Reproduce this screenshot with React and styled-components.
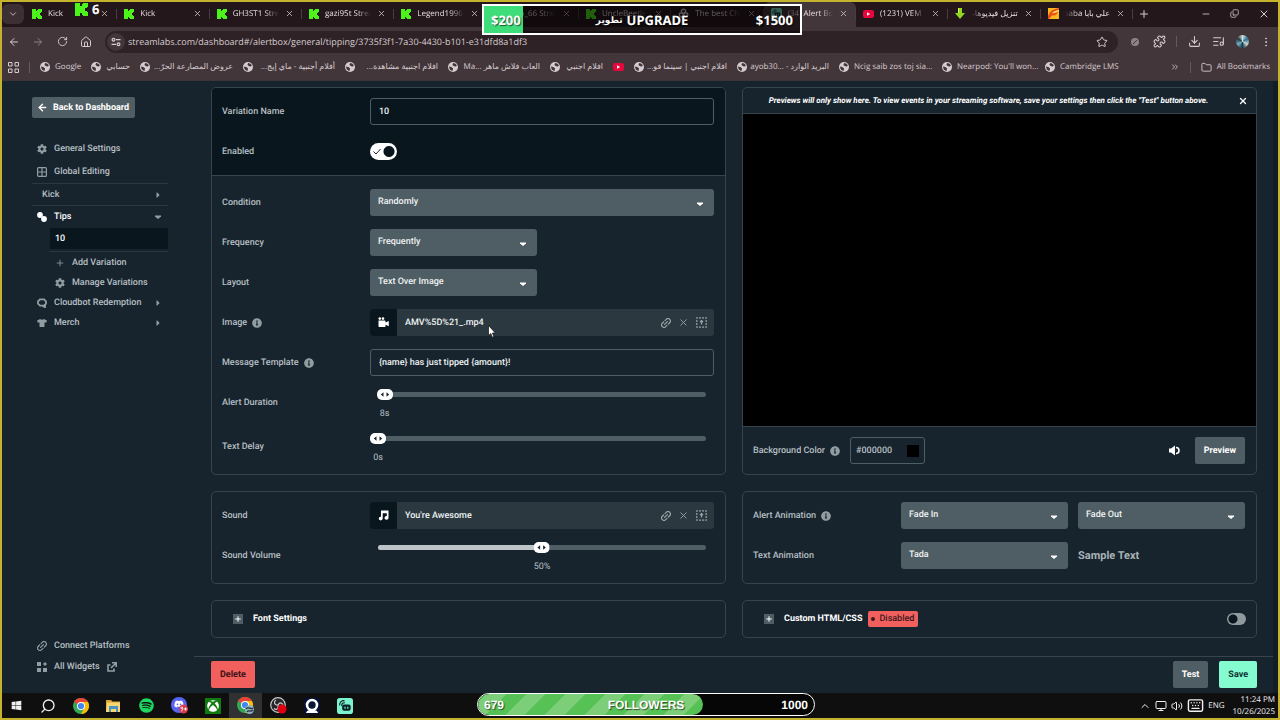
import React, { useState } from 'react';
import styled, { createGlobalStyle, css } from 'styled-components';
import {
  ArrowLeft, ArrowRight, RotateCw, House, Star, Puzzle, Download, ListMusic,
  EllipsisVertical, X, Plus, Minus, Copy, Folder, ChevronsRight, ChevronDown,
  ChevronUp, Search, Keyboard, Volume2, Monitor,
} from 'lucide-react';
import { FaCog, FaTshirt, FaInfoCircle, FaWindows, FaSpotify, FaDiscord, FaXbox } from 'react-icons/fa';

const c = {
  frame: '#c6b32d',
  strip: '#23171b',
  toolbar: '#43363a',
  field: '#2e2226',
  chromeText: '#d6cccf',
  page: '#17242d',
  dark: '#09161d',
  line: '#37444b',
  panel: '#2b383f',
  button: '#4f5e64',
  text: '#b6bfc3',
  icon: '#929da2',
  bright: '#eef2f3',
  red: '#f2605d',
  mint: '#85fbd0',
};

const Global = createGlobalStyle`
  *, *::before, *::after { box-sizing: border-box; }
  body { margin: 0; background: ${c.page}; text-rendering: geometricPrecision; }
  button, input, select { font: inherit; color: inherit; margin: 0; text-rendering: inherit; }
  button { border: 0; padding: 0; background: none; cursor: pointer; }
  a { color: inherit; text-decoration: none; }
  svg { display: block; flex: none; }
`;

const Frame = styled.div`
  position: relative;
  display: flex;
  flex-direction: column;
  min-height: 100vh;
  border: 2px solid ${c.frame};
  font-family: Roboto, "Noto Sans", sans-serif;
  font-size: 9px;
  line-height: 14px;
  overflow: hidden;
`;

/* ---------- browser chrome ---------- */

const Chrome = styled.header`
  background: ${c.toolbar};
  color: ${c.chromeText};
  font-family: "Open Sans", "DejaVu Sans", sans-serif;
  font-size: 8px;
`;

const TabStrip = styled.div`
  display: flex;
  align-items: stretch;
  height: 25px;
  background: ${c.strip};
`;

const TabSearch = styled.button`
  display: grid;
  place-items: center;
  width: 22px;
  margin: 2px 1px 3px 0;
  border-radius: 6px;
  background: #3c3035;
`;

const Tabs = styled.nav`
  display: flex;
  flex: 1;
  min-width: 0;
`;

const Tab = styled.div`
  position: relative;
  display: flex;
  flex: 1 1 0;
  min-width: 0;
  align-items: center;
  gap: 6px;
  padding: 0 8px 2px 7px;
  border-radius: 6px 6px 0 0;
  background: ${p => (p.$active ? c.toolbar : 'transparent')};
  &::after {
    content: '';
    position: absolute;
    right: 0;
    top: 7px;
    height: 10px;
    border-right: 1px solid #4b3d42;
  }
`;

const TabTitle = styled.a`
  flex: 1;
  min-width: 0;
  overflow: hidden;
  color: #e6dddf;
  white-space: nowrap;
  mask-image: linear-gradient(to ${p => (p.$rtl ? 'left' : 'right')}, #000 70%, transparent);
`;

const WindowButtons = styled.div`
  display: flex;
  align-items: center;
  width: 145px;
  padding: 0 0 2px 4px;
`;

const WindowButton = styled.button`
  display: grid;
  place-items: center;
  width: 29px;
  height: 18px;
  &:first-child { width: 14px; margin-right: auto; }
`;

const Toolbar = styled.div`
  display: flex;
  align-items: center;
  height: 29px;
`;

const ToolButton = styled.button`
  display: grid;
  place-items: center;
  width: 24px;
  height: 22px;
  opacity: ${p => (p.$dim ? 0.5 : 1)};
`;

const AddressBar = styled.label`
  display: flex;
  flex: 1;
  align-items: center;
  height: 22px;
  margin: 0 5px 0 7px;
  padding-right: 10px;
  border-radius: 11px;
  background: ${c.field};
`;

const SiteInfo = styled.span`
  display: grid;
  place-items: center;
  width: 18px;
  height: 18px;
  margin: 0 3px 0 2px;
  border-radius: 9px;
  background: #43363a;
`;

const AddressInput = styled.input`
  flex: 1;
  min-width: 0;
  border: 0;
  padding: 0;
  outline: 0;
  background: none;
  font-size: 9px;
`;

const Divider = styled.span`
  width: 1px;
  height: 11px;
  margin: 0 ${p => p.$space || 5}px;
  background: #66585d;
`;

const Avatar = styled.span`
  width: 13px;
  height: 13px;
  border-radius: 50%;
  background: conic-gradient(#cfe0e3, #2f6f8e, #c9d4cf, #1d3a4d, #6fb2c4, #26353c, #cfe0e3);
`;

const Bookmarks = styled.nav`
  display: flex;
  align-items: center;
  height: 25px;
  padding: 0 8px 2px 6px;
  border-bottom: 1px solid #3b3438;
`;

const Bookmark = styled.a`
  display: flex;
  align-items: center;
  gap: 5px;
  margin-right: 10px;
`;

const BookmarkText = styled.span`
  width: ${p => p.$width}px;
  white-space: nowrap;
`;

const BookmarkEnd = styled.div`
  display: flex;
  align-items: center;
  gap: 5px;
  margin-left: auto;
  white-space: nowrap;
`;

/* ---------- goal overlays ---------- */

const Overlay = styled.div`
  position: absolute;
  z-index: 2;
  display: grid;
  grid-template-columns: 1fr auto 1fr;
  align-items: center;
  color: #fff;
  font-weight: 700;
  text-shadow: 1px 1px 1px rgba(0, 0, 0, 0.6);
  & > :last-child { text-align: right; }
`;

const UpgradeGoal = styled(Overlay)`
  top: 2px;
  left: calc(50% - 158px);
  width: 320px;
  height: 31px;
  padding: 0 7px;
  border: 2px solid #fff;
  background: linear-gradient(to right, #3fdd7a 39px, rgba(6, 2, 4, 0.62) 39px);
  font-family: "Noto Sans", "DejaVu Sans", sans-serif;
  font-size: 13px;
`;

const GoalName = styled.span`
  display: flex;
  align-items: center;
  gap: 4px;
`;

const GoalArabic = styled.span`
  font-size: 9px;
`;

const FollowerGoal = styled(Overlay)`
  bottom: 2px;
  left: calc(50% - 163px);
  width: 338px;
  height: 23px;
  padding: 0 6px;
  border: 1px solid #fff;
  border-radius: 12px;
  background: #060606;
  font-family: "Liberation Sans", sans-serif;
  font-size: 12px;
  overflow: hidden;
  & > * { position: relative; }
  &::before {
    content: '';
    position: absolute;
    inset: 0 auto 0 0;
    width: 67%;
    border-radius: 11px;
    background: repeating-linear-gradient(-45deg, #56c255 0 14px, #7ccf78 14px 28px);
  }
`;

const ViewerBadge = styled.div`
  position: absolute;
  z-index: 2;
  top: 0;
  left: 73px;
  display: flex;
  align-items: center;
  gap: 4px;
  color: #fff;
  font: 700 13px/15px "Noto Sans", sans-serif;
`;

const Pointer = styled.svg`
  position: absolute;
  z-index: 3;
  left: 486px;
  top: 323px;
`;

/* ---------- dashboard ---------- */

const Dashboard = styled.div`
  display: flex;
  flex: 1;
  background: ${c.page};
  color: ${c.text};
  font-weight: 500;
  border-right: 5px solid #121d25;
`;

const Sidebar = styled.aside`
  display: flex;
  flex-direction: column;
  width: 192px;
  padding: 16px 26px 16px 30px;
`;

const Button = styled.button`
  display: flex;
  align-items: center;
  justify-content: center;
  height: 27px;
  padding: 0 9px;
  border-radius: 2px;
  background: ${p => p.$bg || c.button};
  color: ${p => p.$color || '#fff'};
  font-weight: 700;
`;

const BackButton = styled.a`
  display: flex;
  align-items: center;
  align-self: flex-start;
  gap: 5px;
  height: 21px;
  margin-bottom: 19px;
  padding: 0 6px 0 5px;
  border-radius: 2px;
  background: ${c.button};
  color: #fff;
  font-weight: 700;
`;

const NavItem = styled.a`
  display: flex;
  align-items: center;
  gap: 7px;
  height: ${p => p.$h || 20}px;
  padding: 0 7px 0 ${p => p.$indent || 5}px;
  border-bottom: ${p => (p.$line ? `1px solid ${c.panel}` : 0)};
  color: ${p => (p.$on ? '#fff' : 'inherit')};
  white-space: nowrap;
  & > svg { color: ${c.icon}; }
`;

const NavEnd = styled.span`
  margin-left: auto;
  color: ${c.icon};
`;

const SubNav = styled.div`
  margin-left: 18px;
`;

const Variation = styled.a`
  display: flex;
  align-items: center;
  height: 21px;
  padding-left: 5px;
  background: ${c.dark};
  color: #fff;
`;

const SubLine = styled.div`
  height: 2px;
  border-top: 1px solid ${c.panel};
  margin-top: 2px;
`;

const NavBottom = styled.div`
  margin-top: auto;
`;

const Main = styled.main`
  display: flex;
  flex: 1;
  flex-direction: column;
  min-width: 0;
`;

const Columns = styled.div`
  display: grid;
  flex: 1;
  grid-template-columns: 1fr 1fr;
  align-content: start;
  gap: 16px;
  padding: 6px 16px 16px 17px;
`;

const Card = styled.section`
  display: flex;
  flex-direction: column;
  border: 1px solid ${c.line};
  border-radius: 5px;
  overflow: hidden;
  min-width: 0;
`;

const Section = styled.div`
  display: flex;
  flex-direction: column;
  gap: 13px;
  padding: ${p => p.$top || 10}px 11px 10px 10px;
  background: ${p => (p.$dark ? c.dark : 'transparent')};
  border-bottom: ${p => (p.$dark ? `1px solid ${c.line}` : 0)};
`;

const Row = styled.div`
  display: grid;
  grid-template-columns: 148px minmax(0, 1fr);
  align-items: start;
`;

const Label = styled.label`
  display: flex;
  align-items: center;
  gap: 5px;
  height: 27px;
  white-space: nowrap;
`;

const field = css`
  width: 100%;
  min-width: 0;
  height: 27px;
  border-radius: 3px;
  padding: 0 8px;
  outline: 0;
`;

const TextInput = styled.input`
  ${field}
  border: 1px solid ${c.button};
  background: transparent;
  color: ${c.bright};
`;

const SelectBox = styled.div`
  display: grid;
  align-items: center;
  max-width: ${p => p.$max || 'none'};
  color: #fff;
  & > * { grid-area: 1 / 1; }
  & > svg { justify-self: end; margin: 2px 11px 0 0; pointer-events: none; }
`;

const Select = styled.select`
  ${field}
  padding-bottom: 2px;
  appearance: none;
  border: 0;
  background: ${c.button};
  color: ${c.bright};
`;

const Pair = styled.div`
  display: grid;
  grid-template-columns: 1fr 1fr;
  gap: 10px;
  align-items: center;
`;

const Sample = styled.span`
  color: #a9b3b7;
  font-size: 11px;
  font-weight: 700;
`;

const FileBar = styled.div`
  display: flex;
  align-items: center;
  height: 27px;
  border-radius: 3px;
  background: ${c.panel};
  color: ${c.bright};
  overflow: hidden;
`;

const FileType = styled.span`
  display: grid;
  place-items: center;
  width: 27px;
  height: 27px;
  margin-right: 8px;
  background: ${c.dark};
`;

const FileActions = styled.div`
  display: flex;
  align-items: center;
  gap: 7px;
  margin-left: auto;
  padding-right: 7px;
  color: #99a4a9;
`;

const SliderBox = styled.div`
  position: relative;
  height: 31px;
  padding-top: 3px;
`;

const Rail = styled.div`
  position: relative;
  height: 5px;
  margin: 0 8px;
  border-radius: 3px;
  background: ${c.button};
`;

const RailFill = styled.div`
  height: 5px;
  border-radius: 3px 0 0 3px;
  background: ${p => (p.$show ? '#bdc5c8' : 'transparent')};
`;

const Marker = styled.output`
  position: absolute;
  top: -3px;
  display: flex;
  flex-direction: column;
  align-items: center;
  gap: 7px;
  transform: translateX(-50%);
  font-weight: 400;
`;

const RangeInput = styled.input`
  position: absolute;
  top: 0;
  left: 0;
  width: 100%;
  height: 11px;
  opacity: 0;
`;

const Toggle = styled.label`
  display: grid;
  align-items: center;
  height: ${p => (p.$small ? 12 : 27)}px;
  width: ${p => (p.$small ? 19 : 27)}px;
  & > * { grid-area: 1 / 1; }
  & > svg { margin-left: 3px; pointer-events: none; }
`;

const ToggleInput = styled.input`
  appearance: none;
  width: 100%;
  height: ${p => (p.$small ? 12 : 17)}px;
  border-radius: 9px;
  background:
    radial-gradient(circle at ${p => (p.$small ? '6px 6px' : '19px 50%')},
      ${c.dark} ${p => (p.$small ? 4 : 5)}px, transparent ${p => (p.$small ? 5 : 6)}px),
    ${p => (p.$small ? '#8f9a9e' : '#fff')};
`;

const PreviewHead = styled.div`
  display: grid;
  grid-template-columns: minmax(0, 1fr) 18px;
  align-items: center;
  height: 26px;
  padding-right: 4px;
  border-bottom: 1px solid ${c.line};
  color: #fff;
  font-size: 8px;
  font-weight: 700;
  font-style: italic;
  text-align: center;
  white-space: nowrap;
  & > button { display: grid; place-items: center; }
`;

const PreviewScreen = styled.div`
  flex: 1;
  background: #000;
`;

const PreviewFoot = styled.div`
  display: flex;
  align-items: center;
  padding: 10px 11px 10px 10px;
  border-top: 1px solid ${c.line};
`;

const ColorField = styled.div`
  display: flex;
  align-items: center;
  width: 75px;
  height: 27px;
  margin-left: 10px;
  padding: 0 5px;
  border: 1px solid ${c.button};
  border-radius: 3px;
`;

const HexInput = styled.input`
  flex: 1;
  min-width: 0;
  border: 0;
  padding: 0;
  background: none;
`;

const Swatch = styled.input`
  appearance: none;
  width: 12px;
  height: 12px;
  border: 0;
  padding: 0;
  background: #000;
  &::-webkit-color-swatch-wrapper { padding: 0; }
  &::-webkit-color-swatch { border: 0; }
`;

const SoundButton = styled.button`
  margin: 0 15px 0 auto;
  color: #fff;
`;

const Collapsed = styled.div`
  display: flex;
  align-items: center;
  height: 36px;
  padding: 0 10px 0 21px;
  color: #fff;
`;

const ExpandButton = styled.button`
  display: flex;
  align-items: center;
  gap: 10px;
  font-weight: 700;
`;

const PlusBox = styled.span`
  display: grid;
  place-items: center;
  width: 10px;
  height: 10px;
  background: ${c.button};
`;

const Badge = styled.span`
  display: flex;
  align-items: center;
  gap: 4px;
  height: 16px;
  margin: 0 auto 0 6px;
  padding: 0 4px 0 3px;
  border-radius: 2px;
  background: ${c.red};
  color: #3c1a20;
`;

const Dot = styled.i`
  width: 4px;
  height: 4px;
  border-radius: 2px;
  background: currentColor;
`;

const Footer = styled.footer`
  display: flex;
  gap: 11px;
  padding: 4px 16px 5px 17px;
  border-top: 1px solid ${c.line};
  & > :first-child { margin-right: auto; }
`;

/* ---------- taskbar ---------- */

const Taskbar = styled.footer`
  display: flex;
  align-items: stretch;
  height: 25px;
  background: #0f0f10;
  color: #f0f0f0;
  font-family: "Open Sans", sans-serif;
`;

const TaskButton = styled.button`
  display: grid;
  place-items: center;
  width: ${p => (p.$start ? 29 : 33)}px;
  background: ${p => (p.$active ? '#303133' : 'transparent')};
`;

const Tray = styled.div`
  display: flex;
  align-items: center;
  gap: 4px;
  margin-left: auto;
  padding-right: 3px;
  font-size: 8px;
`;

const Clock = styled.time`
  display: flex;
  flex-direction: column;
  align-items: flex-end;
  margin-left: 4px;
  line-height: 12px;
`;

/* ---------- drawings ---------- */

const KickMark = ({ size = 10 }) => (
  <svg width={size} height={size} viewBox="0 0 10 10" fill="#4df41a" shapeRendering="crispEdges">
    <path d="M0 0h4v2h1V1h1V0h4v3H9v1H8v2h1v1h1v3H6V9H5V8H4v2H0z" />
  </svg>
);

const YouTubeMark = () => (
  <svg width="11" height="10" viewBox="0 0 11 10">
    <rect y="1" width="11" height="8" rx="2" fill="#e8063c" />
    <path d="M4 3.2v3.6L7.2 5z" fill="#fff" />
  </svg>
);

const DownloadMark = () => (
  <svg width="10" height="11" viewBox="0 0 10 11">
    <path d="M3 0h4v5h3L5 11 0 5h3z" fill="#8fd61c" />
    <path d="M3 0h1v5H3z" fill="#d7f26a" />
  </svg>
);

const ShopMark = () => (
  <svg width="11" height="11" viewBox="0 0 11 11">
    <rect width="11" height="11" fill="#ffb81c" />
    <path d="M0 8C2 3 5 1 11 0v2C6 3 5 4 4 5c2 .5 4 0 6-1-1 3-4 4-6 3.500C3 8.500 2 10 1 11H0z" fill="#e8501c" />
    <path d="M5.500 4.500C7 3.500 9 3 11 2.500" stroke="#fff3b0" strokeWidth=".8" fill="none" />
  </svg>
);

const GptMark = () => (
  <svg width="11" height="11" viewBox="0 0 12 12" fill="none" stroke="#d8d0d3" strokeWidth="1.6">
    <circle cx="6" cy="3.6" r="2.3" /><circle cx="3.7" cy="7.4" r="2.3" /><circle cx="8.3" cy="7.4" r="2.3" />
  </svg>
);

const StreamlabsMark = ({ size = 11 }) => (
  <svg width={size} height={size} viewBox="0 0 17 17">
    <rect width="17" height="17" rx="3" fill="#7df2cf" />
    <rect x="5.500" y="7" width="9" height="6.500" rx="2" fill="#0c2229" />
    <path d="M2.800 7.500c0-3 1.700-4.700 4.700-4.700M5 8c0-2 1-3 3-3" fill="none" stroke="#0c2229" strokeWidth="1.200" strokeLinecap="round" />
    <path d="M8.500 9.500v1.500M11.500 9.500v1.500" stroke="#7df2cf" strokeWidth="1.200" strokeLinecap="round" />
  </svg>
);

const Globe = () => (
  <svg width="10" height="10" viewBox="0 0 10 10">
    <circle cx="5" cy="5" r="5" fill="#d6cccf" />
    <path d="M5.2.9 4.400 3l1.700 1.200L8 4.500l.9-1.200C8.200 1.800 6.700.9 5.200.9zM1 4.600l2.300.3L5 6.300l-.4 2.800C2.700 9 1 7.200 1 4.600z" fill="#43363a" />
  </svg>
);

const TuneIcon = () => (
  <svg width="10" height="10" viewBox="0 0 10 10" fill="none" stroke="currentColor" strokeWidth="1.2">
    <circle cx="2.500" cy="2.700" r="1.400" /><path d="M5 2.700h4.500M.5 7.300H5" /><circle cx="7.500" cy="7.300" r="1.400" />
  </svg>
);

const AppsIcon = () => (
  <svg width="11" height="11" viewBox="0 0 11 11" fill="none" stroke="currentColor">
    <path d="M.5.500h3.500V4H.5zM7 .5h3.500V4H7zM.5 7h3.500v3.500H.5zM7 7h3.500v3.500H7z" />
  </svg>
);

const Caret = ({ side }) => (
  <svg width="6" height="6" viewBox="0 0 6 6" fill="currentColor">
    {side
      ? <path d="M1.500.5h.8L4.600 3 2.300 5.500h-.8z" />
      : <path d="M0 1.500h6v.8L3.500 4.800h-1L0 2.300z" />}
  </svg>
);

const GridIcon = () => (
  <svg width="10" height="10" viewBox="0 0 10 10" fill="none" stroke="currentColor" strokeWidth="1.200">
    <rect x=".6" y=".6" width="8.800" height="8.800" rx="1" /><path d="M5 1v8M1 5h8" />
  </svg>
);

const TipsIcon = () => (
  <svg width="10" height="10" viewBox="0 0 10 10" fill="#fff">
    <circle cx="3" cy="3" r="2.900" /><circle cx="7" cy="7" r="2.900" />
  </svg>
);

const BotIcon = () => (
  <svg width="10" height="10" viewBox="0 0 10 10" fill="none" stroke="currentColor" strokeWidth="1.800">
    <path d="M3 1.300h4l2 2v2.400l-2 2H3l-2-2V3.300z" /><path d="M5.500 7.600 8 9.300V7" />
  </svg>
);

const LinkIcon = () => (
  <svg width="10" height="10" viewBox="0 0 10 10" fill="none" stroke="currentColor" strokeWidth="1.200" strokeLinecap="round">
    <g transform="rotate(-45 5 5)">
      <path d="M4 2.600H2.200a2.400 2.400 0 0 0 0 4.800H4M6 2.600h1.800a2.400 2.400 0 0 1 0 4.800H6M3 5h4" />
    </g>
  </svg>
);

const WidgetsIcon = () => (
  <svg width="10" height="10" viewBox="0 0 10 10" fill="currentColor">
    <path d="M0 0h4v4H0zM0 6h4v4H0zM6 6h4v4H6zM8 0l2 2-2 2-2-2z" />
  </svg>
);

const ExternalIcon = () => (
  <svg width="10" height="10" viewBox="0 0 10 10" fill="none" stroke="currentColor" strokeWidth="1.600">
    <path d="M3.500 3H1v6h6V6.500M5 .8h4.200V5M9 1 4 6" />
  </svg>
);

const UploadIcon = () => (
  <svg width="11" height="11" viewBox="0 0 11 11" fill="none" stroke="currentColor" strokeWidth="1.200">
    <rect x=".8" y=".8" width="9.400" height="9.400" strokeDasharray="2 1.130" strokeDashoffset="1" />
    <path d="M5.500 7.500V4M4 5l1.500-1.500L7 5" />
  </svg>
);

const CameraIcon = () => (
  <svg width="11" height="11" viewBox="0 0 11 11" fill="#fff">
    <circle cx="1.800" cy="1.600" r="1.300" /><circle cx="5" cy="1.600" r="1.300" />
    <path d="M.5 3.500h6.300c.5 0 .7.3.7.7v1.300L10.800 4v5.200L7.500 7.800v1.500c0 .5-.3.700-.7.700H1.200c-.4 0-.7-.3-.7-.7z" />
  </svg>
);

const NoteIcon = () => (
  <svg width="11" height="11" viewBox="0 0 11 11" fill="#fff">
    <path d="M3 .5h7.500v7.400a2 1.800 0 1 1-2-1.800h.3V3.200H4.700v5.400a2 1.800 0 1 1-2-1.800H3z" />
  </svg>
);

const SpeakerIcon = () => (
  <svg width="11" height="11" viewBox="0 0 11 11">
    <path d="M0 3.500h2L6 .5v10L2 7.500H0z" fill="#fff" />
    <path d="M7 2.500a3 3 0 0 1 0 6" fill="none" stroke="#fff" strokeWidth="1.600" />
  </svg>
);

const Knob = () => (
  <svg width="16" height="11" viewBox="0 0 16 11">
    <rect width="16" height="11" rx="5" fill="#fff" />
    <path d="M6.500 3.300v4.400L3.800 5.500zM9.500 3.300v4.400l2.700-2.200z" fill="#17242d" />
  </svg>
);

const ChromeDisc = () => (
  <g>
    <circle cx="8" cy="8" r="8" fill="#34a853" />
    <path d="M8 8 1.070 4A8 8 0 0 1 14.930 4z" fill="#ea4335" />
    <path d="M8 4h6.930A8 8 0 0 1 8 16l3.460-6z" fill="#fbbc05" />
    <circle cx="8" cy="8" r="4" fill="#fff" /><circle cx="8" cy="8" r="3.100" fill="#4285f4" />
  </g>
);

const ChromeMark = () => (
  <svg width="16" height="16" viewBox="0 0 16 16"><ChromeDisc /></svg>
);

const ChromeProfileMark = () => (
  <svg width="17" height="17" viewBox="0 0 17 17">
    <ChromeDisc />
    <circle cx="12.500" cy="12.500" r="4.500" fill="#8fb4bf" />
    <path d="M9 12c2-3 5 1 7-1M10 15c2-3 3 1 6-2" stroke="#22323c" strokeWidth="1.300" fill="none" />
  </svg>
);

const FolderMark = () => (
  <svg width="15" height="14" viewBox="0 0 15 14">
    <path d="M0 1h5l1.500 1.500H14V13H0z" fill="#d9a531" /><path d="M1 3.500h13V13H0z" fill="#fad673" />
    <path d="M3 7h9v6h-2v-3H5v3H3z" fill="#4a94c4" />
  </svg>
);

const DiscordMark = () => (
  <svg width="17" height="17" viewBox="0 0 17 17">
    <circle cx="8" cy="8" r="8" fill="#5865f2" />
    <FaDiscord x="3" y="2" size="10" color="#fff" />
    <circle cx="12.500" cy="12" r="4.500" fill="#d83c4e" />
    <path d="M10 14c2 0 2.500-4 .8-4-1.400 0-1.200 2 .3 1.700M13 12h3M14.500 10.500v3" stroke="#fff" strokeWidth=".9" fill="none" />
  </svg>
);

const XboxMark = () => (
  <svg width="16" height="16" viewBox="0 0 16 16">
    <rect width="16" height="16" fill="#107c10" />
    <FaXbox x="2" y="2" size="12" color="#fff" />
  </svg>
);

const ObsMark = () => (
  <svg width="17" height="17" viewBox="0 0 17 17">
    <circle cx="8" cy="8" r="7.300" fill="#26262b" stroke="#c9c9c9" strokeWidth="1.200" />
    <path d="M8 8C4 8 3.500 4.500 6 3M8 8c2-3.500 5-2 5 1M8 8c1 4-2 5.500-4 3.500" fill="none" stroke="#c9c9c9" strokeWidth="1.200" />
    <circle cx="12" cy="12" r="4.500" fill="#e00010" />
  </svg>
);

const CamAppMark = () => (
  <svg width="16" height="16" viewBox="0 0 16 16">
    <rect width="16" height="16" rx="2" fill="#071030" />
    <circle cx="8" cy="7" r="5" fill="#0b1536" stroke="#fff" strokeWidth="2.600" />
    <path d="M2 15c1-3 3-3 6-3s5 0 6 3z" fill="#fff" />
  </svg>
);

/* ---------- data ---------- */

const tabs = [
  { icon: <KickMark />, title: 'Kick' },
  { icon: <KickMark />, title: 'Kick' },
  { icon: <KickMark />, title: 'GH3ST1 Stream' },
  { icon: <KickMark />, title: 'gazi95t Stream' },
  { icon: <KickMark />, title: 'Legend1996' },
  { icon: <KickMark />, title: 'Abo_66 Stream' },
  { icon: <KickMark />, title: 'UncleBeetle' },
  { icon: <GptMark />, title: 'The best Chat' },
  { icon: <StreamlabsMark />, title: '(34) Alert Box', active: true },
  { icon: <YouTubeMark />, title: '(1231) VEM' },
  { icon: <DownloadMark />, title: 'تنزيل فيديوهات', rtl: true },
  { icon: <ShopMark />, title: 'علي بابا baba', rtl: true },
];

const bookmarks = [
  { text: 'Google', width: 26 },
  { text: 'حسابي', width: 24, rtl: true },
  { text: 'عروض المصارعة الحرّ...', width: 78, rtl: true },
  { text: 'أفلام أجنبية - ماي إيج...', width: 77, rtl: true },
  { text: 'افلام اجنبية مشاهدة...', width: 78, rtl: true },
  { text: 'العاب فلاش ماهر Ma...\u200e', width: 77, rtl: true },
  { text: 'افلام اجنبي', width: 38, rtl: true },
  { icon: <YouTubeMark /> },
  { text: 'افلام اجنبي | سينما فو...', width: 78, rtl: true },
  { text: 'البريد الوارد - ayob30...\u200e', width: 77, rtl: true },
  { text: 'Ncig saib zos toj sia...', width: 78 },
  { text: "Nearpod: You'll won...", width: 78 },
  { text: 'Cambridge LMS', width: 60 },
];

const apps = [
  { name: 'Start', icon: <FaWindows size={11} />, start: true },
  { name: 'Search', icon: <Search size={16} style={{ transform: 'scaleX(-1)' }} /> },
  { name: 'Chrome', icon: <ChromeMark /> },
  { name: 'Files', icon: <FolderMark /> },
  { name: 'Spotify', icon: <FaSpotify size={15} color="#1ed760" /> },
  { name: 'Discord', icon: <DiscordMark /> },
  { name: 'Xbox', icon: <XboxMark /> },
  { name: 'Chrome profile', icon: <ChromeProfileMark />, active: true },
  { name: 'OBS', icon: <ObsMark /> },
  { name: 'Camera', icon: <CamAppMark /> },
  { name: 'Streamlabs', icon: <StreamlabsMark size={16} /> },
];

/* ---------- composed parts ---------- */

const Info = () => <FaInfoCircle size={10} color={c.icon} />;

const Dropdown = ({ id, value, max, label }) => (
  <SelectBox $max={max}>
    <Select id={id} aria-label={label} defaultValue={value}><option>{value}</option></Select>
    <Caret />
  </SelectBox>
);

const File = ({ icon, name }) => (
  <FileBar>
    <FileType>{icon}</FileType>
    {name}
    <FileActions>
      <button aria-label="Link"><LinkIcon /></button>
      <button aria-label="Remove"><X size={11} /></button>
      <button aria-label="Upload"><UploadIcon /></button>
    </FileActions>
  </FileBar>
);

function Slider({ id, start, max, unit, filled }) {
  const [value, setValue] = useState(start);
  const percent = (value / max) * 100;
  return (
    <SliderBox>
      <Rail>
        <RailFill $show={filled} style={{ width: `${percent}%` }} />
        <Marker style={{ left: `${percent}%` }}><Knob />{value}{unit}</Marker>
      </Rail>
      <RangeInput id={id} type="range" min="0" max={max} value={value} onChange={e => setValue(Number(e.target.value))} />
    </SliderBox>
  );
}

const SettingRow = ({ id, label, info, children }) => (
  <Row>
    <Label htmlFor={id}>{label}{info && <Info />}</Label>
    {children}
  </Row>
);

const BrowserChrome = () => (
  <Chrome>
    <TabStrip>
      <TabSearch aria-label="Search tabs"><ChevronDown size={10} /></TabSearch>
      <Tabs>
        {tabs.map((t, i) => (
          <Tab key={i} $active={t.active}>
            {t.icon}
            <TabTitle href="#" $rtl={t.rtl} dir={t.rtl ? 'rtl' : 'ltr'}>{t.title}</TabTitle>
            <button aria-label="Close tab"><X size={9} /></button>
          </Tab>
        ))}
      </Tabs>
      <WindowButtons>
        <WindowButton aria-label="New tab"><Plus size={12} /></WindowButton>
        <WindowButton aria-label="Minimize"><Minus size={10} /></WindowButton>
        <WindowButton aria-label="Restore"><Copy size={9} style={{ transform: 'scaleY(-1)' }} /></WindowButton>
        <WindowButton aria-label="Close window"><X size={12} /></WindowButton>
      </WindowButtons>
    </TabStrip>
    <Toolbar>
      <ToolButton aria-label="Back"><ArrowLeft size={12} /></ToolButton>
      <ToolButton aria-label="Forward" $dim><ArrowRight size={12} /></ToolButton>
      <ToolButton aria-label="Reload"><RotateCw size={11} /></ToolButton>
      <ToolButton aria-label="Home"><House size={12} /></ToolButton>
      <AddressBar>
        <SiteInfo><TuneIcon /></SiteInfo>
        <AddressInput aria-label="Address" defaultValue="streamlabs.com/dashboard#/alertbox/general/tipping/3735f3f1-7a30-4430-b101-e31dfd8a1df3" />
        <Star size={12} />
      </AddressBar>
      <ToolButton aria-label="Extension" $dim>
        <svg width="8" height="8" viewBox="0 0 8 8"><circle cx="4" cy="4" r="4" fill="#d6cccf" /><path d="M2 6l4-4" stroke="#43363a" /></svg>
      </ToolButton>
      <ToolButton aria-label="Extensions"><Puzzle size={13} /></ToolButton>
      <Divider />
      <ToolButton aria-label="Downloads"><Download size={13} /></ToolButton>
      <ToolButton aria-label="Media"><ListMusic size={13} /></ToolButton>
      <ToolButton aria-label="Profile"><Avatar /></ToolButton>
      <ToolButton aria-label="Menu"><EllipsisVertical size={12} /></ToolButton>
    </Toolbar>
    <Bookmarks>
      <AppsIcon />
      <Divider $space={10} />
      {bookmarks.map((b, i) => (
        <Bookmark key={i} href="#" aria-label={b.text || 'YouTube'}>
          {b.icon || <Globe />}
          {b.text && <BookmarkText $width={b.width} dir={b.rtl ? 'rtl' : 'ltr'}>{b.text}</BookmarkText>}
        </Bookmark>
      ))}
      <BookmarkEnd>
        <ChevronsRight size={10} />
        <Divider />
        <Folder size={11} />
        All Bookmarks
      </BookmarkEnd>
    </Bookmarks>
  </Chrome>
);

const SideNavigation = () => (
  <Sidebar>
    <BackButton href="#"><ArrowLeft size={11} strokeWidth={3} />Back to Dashboard</BackButton>
    <nav>
      <NavItem href="#" $h={23}><FaCog size={10} />General Settings</NavItem>
      <NavItem href="#" $h={24} $line><GridIcon />Global Editing</NavItem>
      <NavItem href="#" $h={22} $line $indent={10}>Kick<NavEnd><Caret side /></NavEnd></NavItem>
      <NavItem href="#" $h={22} $on><TipsIcon />Tips<NavEnd><Caret /></NavEnd></NavItem>
      <SubNav>
        <Variation href="#">10</Variation>
        <SubLine />
        <NavItem href="#"><Plus size={10} />Add Variation</NavItem>
        <NavItem href="#"><FaCog size={10} />Manage Variations</NavItem>
      </SubNav>
      <NavItem href="#"><BotIcon />Cloudbot Redemption<NavEnd><Caret side /></NavEnd></NavItem>
      <NavItem href="#"><FaTshirt size={10} />Merch<NavEnd><Caret side /></NavEnd></NavItem>
    </nav>
    <NavBottom>
      <NavItem href="#" $h={21}><LinkIcon />Connect Platforms</NavItem>
      <NavItem href="#" $h={21}><WidgetsIcon />All Widgets<ExternalIcon /></NavItem>
    </NavBottom>
  </Sidebar>
);

export default function App() {
  return (
    <>
      <Global />
      <Frame>
        <BrowserChrome />
        <Dashboard>
          <SideNavigation />
          <Main>
            <Columns>
              <Card>
                <Section $dark>
                  <SettingRow id="name" label="Variation Name"><TextInput id="name" defaultValue="10" /></SettingRow>
                  <SettingRow id="enabled" label="Enabled">
                    <Toggle>
                      <ToggleInput id="enabled" type="checkbox" defaultChecked />
                      <svg width="8" height="7" viewBox="0 0 8 7" fill="none" stroke="#17242d"><path d="M.5 3.500 3 6l4.500-5" /></svg>
                    </Toggle>
                  </SettingRow>
                </Section>
                <Section $top={13}>
                  <SettingRow id="condition" label="Condition"><Dropdown id="condition" value="Randomly" /></SettingRow>
                  <SettingRow id="frequency" label="Frequency"><Dropdown id="frequency" value="Frequently" max="167px" /></SettingRow>
                  <SettingRow id="layout" label="Layout"><Dropdown id="layout" value="Text Over Image" max="167px" /></SettingRow>
                  <SettingRow label="Image" info><File icon={<CameraIcon />} name="AMV%5D%21_.mp4" /></SettingRow>
                  <SettingRow id="message" label="Message Template" info>
                    <TextInput id="message" defaultValue="{name} has just tipped {amount}!" />
                  </SettingRow>
                  <SettingRow id="duration" label="Alert Duration"><Slider id="duration" start={8} max={400} unit="s" /></SettingRow>
                  <SettingRow id="delay" label="Text Delay"><Slider id="delay" start={0} max={60} unit="s" /></SettingRow>
                </Section>
              </Card>

              <Card>
                <PreviewHead>
                  <span>Previews will only show here. To view events in your streaming software, save your settings then click the "Test" button above.</span>
                  <button aria-label="Dismiss"><X size={10} strokeWidth={3} /></button>
                </PreviewHead>
                <PreviewScreen />
                <PreviewFoot>
                  <Label htmlFor="background">Background Color<Info /></Label>
                  <ColorField>
                    <HexInput id="background" defaultValue="#000000" />
                    <Swatch type="color" aria-label="Pick color" defaultValue="#000000" />
                  </ColorField>
                  <SoundButton aria-label="Sound"><SpeakerIcon /></SoundButton>
                  <Button>Preview</Button>
                </PreviewFoot>
              </Card>

              <Card>
                <Section>
                  <SettingRow label="Sound"><File icon={<NoteIcon />} name="You're Awesome" /></SettingRow>
                  <SettingRow id="volume" label="Sound Volume"><Slider id="volume" start={50} max={100} unit="%" filled /></SettingRow>
                </Section>
              </Card>

              <Card>
                <Section>
                  <SettingRow id="anim-in" label="Alert Animation" info>
                    <Pair>
                      <Dropdown id="anim-in" value="Fade In" />
                      <Dropdown label="Out animation" value="Fade Out" />
                    </Pair>
                  </SettingRow>
                  <SettingRow id="anim-text" label="Text Animation">
                    <Pair>
                      <Dropdown id="anim-text" value="Tada" />
                      <Sample>Sample Text</Sample>
                    </Pair>
                  </SettingRow>
                </Section>
              </Card>

              <Card>
                <Collapsed>
                  <ExpandButton><PlusBox><Plus size={8} strokeWidth={3} /></PlusBox>Font Settings</ExpandButton>
                </Collapsed>
              </Card>

              <Card>
                <Collapsed>
                  <ExpandButton><PlusBox><Plus size={8} strokeWidth={3} /></PlusBox>Custom HTML/CSS</ExpandButton>
                  <Badge><Dot />Disabled</Badge>
                  <Toggle $small><ToggleInput $small type="checkbox" aria-label="Custom HTML/CSS" /></Toggle>
                </Collapsed>
              </Card>
            </Columns>
            <Footer>
              <Button $bg={c.red} $color="#3c1217">Delete</Button>
              <Button>Test</Button>
              <Button $bg={c.mint} $color="#0e3530">Save</Button>
            </Footer>
          </Main>
        </Dashboard>

        <Taskbar>
          {apps.map(a => (
            <TaskButton key={a.name} aria-label={a.name} $start={a.start} $active={a.active}>{a.icon}</TaskButton>
          ))}
          <Tray>
            <ChevronUp size={12} />
            <Monitor size={12} />
            <Volume2 size={12} />
            <Keyboard size={17} />
            <span>ENG</span>
            <Clock><span>11:24 PM</span><span>10/26/2025</span></Clock>
          </Tray>
        </Taskbar>

        <ViewerBadge><KickMark size={13} />6</ViewerBadge>
        <UpgradeGoal>
          <span>$200</span>
          <GoalName><GoalArabic>تطوير</GoalArabic>UPGRADE</GoalName>
          <span>$1500</span>
        </UpgradeGoal>
        <FollowerGoal><span>679</span><span>FOLLOWERS</span><span>1000</span></FollowerGoal>
        <Pointer width="8" height="13" viewBox="0 0 8 13">
          <path d="M.5.5v10l2.300-2 1.500 3.700 1.600-.7-1.500-3.500h3z" fill="#fff" stroke="#111" strokeWidth=".7" />
        </Pointer>
      </Frame>
    </>
  );
}
